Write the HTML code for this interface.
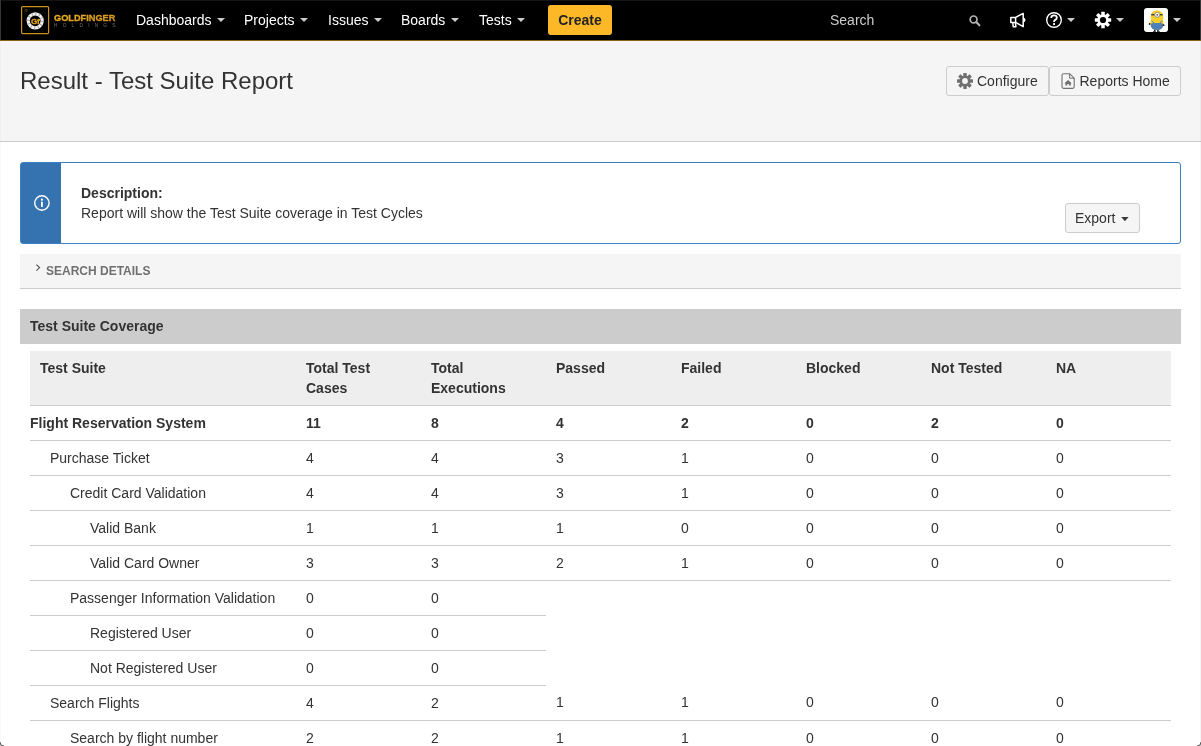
<!DOCTYPE html>
<html>
<head>
<meta charset="utf-8">
<title>Result - Test Suite Report</title>
<style>
*{box-sizing:border-box;margin:0;padding:0}
html,body{width:1201px;height:746px;overflow:hidden;background:#fff;font-family:"Liberation Sans",sans-serif;color:#333;font-size:14px}
#nav{position:absolute;left:0;top:0;width:1201px;height:41px;background:#000;border-bottom:1px solid #8a6514}
#nav .it{position:absolute;top:11px;color:#fff;font-size:14px;line-height:18px;white-space:nowrap}
#nav .car{position:absolute;top:18px;width:0;height:0;border-left:4px solid transparent;border-right:4px solid transparent;border-top:4px solid #ccc}
#create{position:absolute;left:548px;top:5px;width:64px;height:30px;background:#fcb827;border-radius:3px;color:#222;font-weight:bold;font-size:14px;line-height:30px;text-align:center}
#phead{position:absolute;left:0;top:41px;width:1201px;height:101px;background:#f5f5f5;border-bottom:1px solid #ccc}
#title{position:absolute;left:20px;top:65px;font-size:24px;line-height:32px;color:#333;white-space:nowrap}
.btn{position:absolute;top:66px;height:30px;background:#f5f5f5;border:1px solid #ccc;font-size:14px;line-height:28px;color:#333;white-space:nowrap}
#info{position:absolute;left:20px;top:162px;width:1161px;height:82px;border:1px solid #3b7fc4;border-radius:3px;background:#fff}
#info .bar{position:absolute;left:0;top:0;width:40px;height:80px;background:#3572b0}
#sd{position:absolute;left:20px;top:254px;width:1161px;height:35px;background:#f5f5f5;border-bottom:1px solid #ccc}
#tsc{position:absolute;left:20px;top:309px;width:1161px;height:35px;background:#ccc;font-weight:bold;font-size:14px;line-height:35px;padding-left:10px;color:#333}
#tbl{position:absolute;left:30px;top:351px;width:1141px}
.r{position:absolute;left:0;height:35px;border-bottom:1px solid #ccc;font-size:14px;line-height:34px;white-space:nowrap}
.r span{position:absolute;top:0}
.b{font-weight:bold}
</style>
</head>
<body>
<div id="wrap" style="position:absolute;left:0;top:0;width:1201px;height:746px;will-change:transform">
<div id="nav">
  <svg style="position:absolute;left:20px;top:5px" width="100" height="30" viewBox="20 5 100 30">
    <defs><linearGradient id="gg" x1="0" y1="0" x2="1" y2="1"><stop offset="0" stop-color="#f6bb2a"/><stop offset="1" stop-color="#c88a17"/></linearGradient></defs>
    <rect x="21.6" y="6.6" width="27" height="27" rx="1" fill="none" stroke="#c9901b" stroke-width="1.2"/>
    <text x="24" y="11.6" font-family="Liberation Sans, sans-serif" font-size="3" font-style="italic" fill="#a87a1c">79</text>
    <circle cx="35.2" cy="20.8" r="7" fill="none" stroke="#f2f2f2" stroke-width="3.2"/>
    <circle cx="35.2" cy="20.8" r="7" fill="none" stroke="#9a9a9a" stroke-width="3.2" stroke-dasharray="1 2.66" opacity=".9"/>
    <text x="35.2" y="23.6" text-anchor="middle" font-family="Liberation Sans, sans-serif" font-weight="bold" font-size="8" fill="#e8a920" stroke="#e8a920" stroke-width=".3" letter-spacing="-0.3">Gf</text>
    <g transform="translate(54 20.8) scale(.9225 .97)"><text x="0" y="0" font-family="Liberation Sans, sans-serif" font-weight="bold" font-size="10" fill="url(#gg)" stroke="url(#gg)" stroke-width=".3">GOLDFINGER</text></g>
    <text x="54" y="27" font-family="Liberation Sans, sans-serif" font-size="4.8" fill="#6e6e6e" textLength="61.5" lengthAdjust="spacing">HOLDINGS</text>
  </svg>
  <div class="it" style="left:136px">Dashboards</div><div class="car" style="left:217px"></div>
  <div class="it" style="left:244px">Projects</div><div class="car" style="left:300px"></div>
  <div class="it" style="left:328px">Issues</div><div class="car" style="left:374px"></div>
  <div class="it" style="left:401px">Boards</div><div class="car" style="left:451px"></div>
  <div class="it" style="left:479px">Tests</div><div class="car" style="left:517px"></div>
  <div id="create">Create</div>
  <div class="it" style="left:830px;color:#ccc">Search</div>
  <svg style="position:absolute;left:966px;top:12px" width="18" height="18" viewBox="966 12 18 18">
    <circle cx="973.6" cy="19.4" r="3.4" fill="none" stroke="#b3b3b3" stroke-width="1.7"/>
    <path d="M976.2 22.1 L979.4 25.3" stroke="#b3b3b3" stroke-width="2.1" stroke-linecap="round"/>
  </svg>
  <svg style="position:absolute;left:1008px;top:11px" width="20" height="18" viewBox="1008 11 20 18">
    <g fill="none" stroke="#fff" stroke-width="1.5" stroke-linejoin="round">
      <path d="M1015.6 17.4 H1010.8 V22.4 H1015.6 L1023.2 26.6 V13.4 Z"/>
      <path d="M1015.6 17.4 V22.4"/>
      <path d="M1012.7 22.4 L1013.3 26.8 H1015.9 L1015.4 22.4"/>
      <path d="M1023.4 18 Q1026.2 20 1023.4 22"/>
    </g>
  </svg>
  <svg style="position:absolute;left:1044px;top:10px" width="20" height="20" viewBox="1044 10 20 20">
    <circle cx="1054" cy="20" r="7.3" fill="none" stroke="#fff" stroke-width="1.4"/>
    <path d="M1051.2 17.9 Q1051.2 15.4 1054 15.4 Q1056.8 15.4 1056.8 17.7 Q1056.8 19.1 1055.2 19.9 Q1054 20.6 1054 21.9" fill="none" stroke="#fff" stroke-width="1.8"/>
    <rect x="1053.1" y="23.1" width="1.9" height="1.9" fill="#fff"/>
  </svg>
  <div class="car" style="left:1067px"></div>
  <svg style="position:absolute;left:1093px;top:10px" width="20" height="20" viewBox="-10 -10 20 20">
    <g fill="#fff">
      <g id="tt"><rect x="-1.75" y="-8.2" width="3.5" height="16.4" rx=".5"/></g>
      <use href="#tt" transform="rotate(45)"/><use href="#tt" transform="rotate(90)"/><use href="#tt" transform="rotate(135)"/>
      <circle r="5.7"/>
    </g>
    <circle r="3.1" fill="#000"/>
  </svg>
  <div class="car" style="left:1116px"></div>
  <svg style="position:absolute;left:1144px;top:8px" width="24" height="24" viewBox="0 0 24 24">
    <rect width="24" height="24" rx="3" fill="#fff"/>
    <g transform="translate(.6 .2)">
    <rect x="9.4" y="21" width="1.6" height="2" fill="#222"/><rect x="12.6" y="21" width="1.6" height="2" fill="#222"/>
    <path d="M8.6 22.8 h2.6 v.8 h-3 z M12.4 22.8 h2.6 l.4 .8 h-3z" fill="#111"/>
    <rect x="6.2" y="2" width="12.4" height="19.8" rx="6" fill="#f5cf2b"/>
    <path d="M6.8 13.5 L4.6 15.2 L5.4 16.4 L7.6 15.2 Z M17.8 13.5 L19.6 16.6 L18.4 17.4 L17 15.2 Z" fill="#f1c524"/>
    <path d="M6.2 15.8 L8.6 14.8 H16.2 L18.6 15.8 V17 Q18.6 21.8 12.4 21.8 Q6.2 21.8 6.2 17 Z" fill="#4f80b3"/>
    <path d="M7 12.6 L9.4 14.8 M17.6 12.6 L15.2 14.8" stroke="#4f80b3" stroke-width="1"/>
    <rect x="6.6" y="5.9" width="11.4" height="1.3" fill="#333"/>
    <circle cx="12.6" cy="6.6" r="2.9" fill="#9a9a9a"/><circle cx="12.6" cy="6.6" r="2" fill="#fff"/><circle cx="12.6" cy="6.6" r=".9" fill="#7a4a2a"/>
    <circle cx="5" cy="15.8" r=".9" fill="#222"/><circle cx="19" cy="17" r=".9" fill="#222"/>
    </g>
  </svg>
  <div class="car" style="left:1173px"></div>
</div>
<div id="phead"></div>
<div id="title">Result - Test Suite Report</div>
<div class="btn" style="left:946px;width:103px;border-radius:3px;padding-left:30px">Configure</div>
<div class="btn" style="left:1049px;width:132px;border-radius:3px;padding-left:29.5px">Reports Home</div>
<svg style="position:absolute;left:956px;top:72px" width="18" height="18" viewBox="-9 -9 18 18">
  <g fill="#707070"><g id="t2"><rect x="-1.7" y="-8" width="3.4" height="16" rx=".5"/></g>
  <use href="#t2" transform="rotate(45)"/><use href="#t2" transform="rotate(90)"/><use href="#t2" transform="rotate(135)"/><circle r="5.6"/></g>
  <circle r="2.9" fill="#f5f5f5"/>
</svg>
<svg style="position:absolute;left:1060px;top:72px" width="16" height="18" viewBox="0 0 16 18">
  <path d="M3.6 1.7 H9.6 L14.2 6.2 V14.8 Q14.2 16.4 12.6 16.4 H3.6 Q2 16.4 2 14.8 V3.3 Q2 1.7 3.6 1.7 Z" fill="none" stroke="#707070" stroke-width="1.1"/>
  <path d="M9.6 1.7 V6.2 H14.2" fill="none" stroke="#707070" stroke-width="1"/>
  <path d="M8.1 8 L11.8 11.3 H10.8 V13.5 H8.9 V11.9 H7.3 V13.5 H5.4 V11.3 H4.4 Z" fill="#707070"/>
</svg>
<div id="info"><div class="bar"></div>
  <svg style="position:absolute;left:10.5px;top:30px" width="20" height="20" viewBox="0 0 20 20">
    <circle cx="9.9" cy="10" r="7.2" fill="none" stroke="#fff" stroke-width="1.4"/>
    <circle cx="9.9" cy="6.7" r="1.1" fill="#fff"/><rect x="9" y="8.7" width="1.8" height="5.2" fill="#fff"/>
  </svg>
  <div style="position:absolute;left:60px;top:20.4px;font-weight:bold;font-size:14px;line-height:20px">Description:</div>
  <div style="position:absolute;left:60px;top:40.4px;font-size:14px;line-height:20px;white-space:nowrap">Report will show the Test Suite coverage in Test Cycles</div>
  <div style="position:absolute;left:1044px;top:40px;width:75px;height:30px;border:1px solid #ccc;border-radius:3px;background:#f5f5f5;font-size:14px;line-height:28px;padding-left:9px">Export<svg style="position:absolute;left:55px;top:13px" width="8" height="5" viewBox="0 0 8 5"><path d="M0.2 0 H7.6 L3.9 4.2 Z" fill="#3a3a3a"/></svg></div>
</div>
<div id="sd"><svg style="position:absolute;left:14px;top:9px" width="8" height="10" viewBox="0 0 8 10"><path d="M2.4 1.6 L5.6 4.6 L2.4 7.6" fill="none" stroke="#505050" stroke-width="1.1"/></svg><div style="position:absolute;left:26px;top:9px;font-size:12px;font-weight:bold;color:#707070;line-height:16px">SEARCH DETAILS</div></div>
<div id="tsc">Test Suite Coverage</div>
<div id="tbl">
<div class="th" style="position:absolute;left:0;top:0;width:1141px;height:55px;background:#eee;border-bottom:1px solid #ccc;font-weight:bold;font-size:14px;line-height:20px;color:#333">
<span style="position:absolute;left:10px;top:7px;white-space:nowrap">Test Suite</span>
<span style="position:absolute;left:276px;top:7px;white-space:nowrap">Total Test<br>Cases</span>
<span style="position:absolute;left:401px;top:7px;white-space:nowrap">Total<br>Executions</span>
<span style="position:absolute;left:526px;top:7px;white-space:nowrap">Passed</span>
<span style="position:absolute;left:651px;top:7px;white-space:nowrap">Failed</span>
<span style="position:absolute;left:776px;top:7px;white-space:nowrap">Blocked</span>
<span style="position:absolute;left:901px;top:7px;white-space:nowrap">Not Tested</span>
<span style="position:absolute;left:1026px;top:7px;white-space:nowrap">NA</span>
</div>
<div class="r b" style="top:55px;width:1141px"><span style="left:0px">Flight Reservation System</span><span style="left:276px">11</span><span style="left:401px">8</span><span style="left:526px">4</span><span style="left:651px">2</span><span style="left:776px">0</span><span style="left:901px">2</span><span style="left:1026px">0</span></div>
<div class="r" style="top:90px;width:1141px"><span style="left:20px">Purchase Ticket</span><span style="left:276px">4</span><span style="left:401px">4</span><span style="left:526px">3</span><span style="left:651px">1</span><span style="left:776px">0</span><span style="left:901px">0</span><span style="left:1026px">0</span></div>
<div class="r" style="top:125px;width:1141px"><span style="left:40px">Credit Card Validation</span><span style="left:276px">4</span><span style="left:401px">4</span><span style="left:526px">3</span><span style="left:651px">1</span><span style="left:776px">0</span><span style="left:901px">0</span><span style="left:1026px">0</span></div>
<div class="r" style="top:160px;width:1141px"><span style="left:60px">Valid Bank</span><span style="left:276px">1</span><span style="left:401px">1</span><span style="left:526px">1</span><span style="left:651px">0</span><span style="left:776px">0</span><span style="left:901px">0</span><span style="left:1026px">0</span></div>
<div class="r" style="top:195px;width:1141px"><span style="left:60px">Valid Card Owner</span><span style="left:276px">3</span><span style="left:401px">3</span><span style="left:526px">2</span><span style="left:651px">1</span><span style="left:776px">0</span><span style="left:901px">0</span><span style="left:1026px">0</span></div>
<div class="r" style="top:230px;width:516px"><span style="left:40px">Passenger Information Validation</span><span style="left:276px">0</span><span style="left:401px">0</span></div>
<div class="r" style="top:265px;width:516px"><span style="left:60px">Registered User</span><span style="left:276px">0</span><span style="left:401px">0</span></div>
<div class="r" style="top:300px;width:516px"><span style="left:60px">Not Registered User</span><span style="left:276px">0</span><span style="left:401px">0</span></div>
<div class="r" style="top:335px;width:1141px"><span style="left:20px">Search Flights</span><span style="left:276px">4</span><span style="left:401px">2</span><span style="left:526px;top:-1px">1</span><span style="left:651px;top:-1px">1</span><span style="left:776px;top:-1px">0</span><span style="left:901px;top:-1px">0</span><span style="left:1026px;top:-1px">0</span></div>
<div class="r" style="top:370px;width:1141px"><span style="left:40px">Search by flight number</span><span style="left:276px">2</span><span style="left:401px">2</span><span style="left:526px">1</span><span style="left:651px">1</span><span style="left:776px">0</span><span style="left:901px">0</span><span style="left:1026px">0</span></div>
<div class="r" style="top:405px;width:1141px"><span style="left:40px">Search by city</span><span style="left:276px">2</span><span style="left:401px">0</span><span style="left:526px">0</span><span style="left:651px">0</span><span style="left:776px">0</span><span style="left:901px">0</span><span style="left:1026px">0</span></div>
</div>
<div style="position:absolute;left:0;top:0;width:1201px;height:1px;background:#141414"></div>
<div style="position:absolute;left:0;top:0;width:1px;height:40px;background:#363636"></div>
<div style="position:absolute;left:1200px;top:0;width:1px;height:40px;background:#363636"></div>
<div style="position:absolute;left:0;top:41px;width:1px;height:705px;background:rgba(0,0,0,.02)"></div>
<div style="position:absolute;left:1200px;top:41px;width:1px;height:705px;background:rgba(0,0,0,.04)"></div>
<svg style="position:absolute;left:0;top:741px" width="5" height="5" viewBox="0 0 5 5"><path d="M0 1 A4 4 0 0 0 4 5 L0 5 Z" fill="#bdbdbd"/><path d="M0 1 A4 4 0 0 0 4 5" fill="none" stroke="#5c5c5c" stroke-width="1"/></svg>
<svg style="position:absolute;left:1196px;top:741px" width="5" height="5" viewBox="0 0 5 5"><path d="M5 1 A4 4 0 0 1 1 5 L5 5 Z" fill="#bdbdbd"/><path d="M5 1 A4 4 0 0 1 1 5" fill="none" stroke="#5c5c5c" stroke-width="1"/></svg>
</div>
</body>
</html>
